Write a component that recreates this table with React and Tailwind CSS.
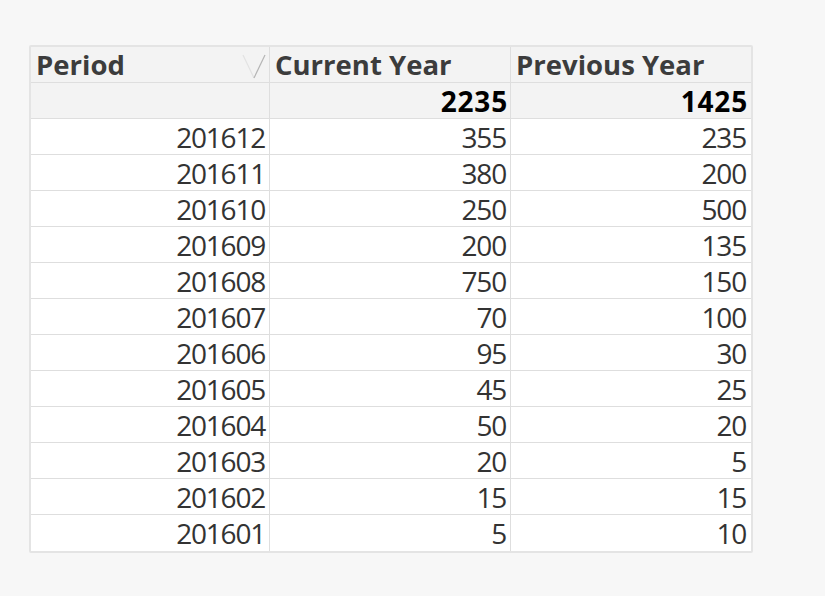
const rows = [
  ['201612', 355, 235],
  ['201611', 380, 200],
  ['201610', 250, 500],
  ['201609', 200, 135],
  ['201608', 750, 150],
  ['201607', 70, 100],
  ['201606', 95, 30],
  ['201605', 45, 25],
  ['201604', 50, 20],
  ['201603', 20, 5],
  ['201602', 15, 15],
  ['201601', 5, 10],
];

const SortIcon = () => (
  <svg className="absolute right-[2px] top-[6px]" width="26" height="26" viewBox="0 0 26 26" fill="none">
    <path d="M2 2 L13 25" stroke="#e2e2e2" strokeWidth="1.2" />
    <path d="M24 2 L13 25" stroke="#b5b5b5" strokeWidth="1.2" />
  </svg>
);

export default function App() {
  const cell = 'h-[36px] flex items-center border-b border-[#dedede]';
  const head = 'font-bold text-[27.5px] text-[#3c3c3c]';
  const total = 'font-bold text-[28px] tracking-[0.8px] text-black';
  const data = 'text-[28px] tracking-[-1.2px] text-[#333]';
  return (
    <div className="min-h-[596px] w-[825px] bg-[#f7f7f7] pt-[45px] pl-[29px] font-['Open_Sans','Noto_Sans',sans-serif]">
      <div className="w-[724px] border-2 border-[#e4e4e4] rounded-[2px] bg-white">
        <div className="grid grid-cols-[239px_241px_240px] leading-none">
          <div className={`${cell} ${head} relative bg-[#f3f3f3] border-r border-[#dedede] pl-[5px]`}>
            Period
            <SortIcon />
          </div>
          <div className={`${cell} ${head} bg-[#f3f3f3] border-r border-[#dedede] pl-[5px]`}>Current Year</div>
          <div className={`${cell} ${head} bg-[#f3f3f3] pl-[5px]`}>Previous Year</div>

          <div className={`${cell} bg-[#f3f3f3] border-r border-[#dedede]`}></div>
          <div className={`${cell} ${total} bg-[#f3f3f3] border-r border-[#dedede] justify-end pr-[2px]`}>2235</div>
          <div className={`${cell} ${total} bg-[#f3f3f3] justify-end pr-[3px]`}>1425</div>

          {rows.map(([p, c, v], i) => {
            const last = i === rows.length - 1 ? 'border-b-0' : '';
            return [
              <div key={p + 'a'} className={`${cell} ${data} ${last} border-r border-[#dedede] justify-end pr-[4px]`}>{p}</div>,
              <div key={p + 'b'} className={`${cell} ${data} ${last} border-r border-[#dedede] justify-end pr-[4px]`}>{c}</div>,
              <div key={p + 'c'} className={`${cell} ${data} ${last} justify-end pr-[5px]`}>{v}</div>,
            ];
          })}
        </div>
      </div>
    </div>
  );
}
